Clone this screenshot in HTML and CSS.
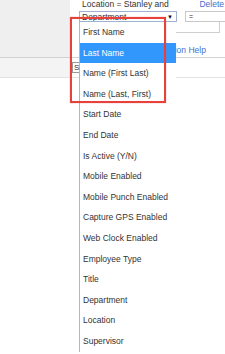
FILE: index.html
```
<!DOCTYPE html>
<html lang="en">

<head>
    <meta charset="UTF-8">
    <meta name="viewport" content="width=device-width, initial-scale=1.0">
    <title>Filter fields</title>
    <link rel="stylesheet" href="styles.css">
</head>

<body>
    <div class="page">
        <div class="top">
            <div class="side"></div>
            <div class="criteria">
                <div class="line1">
                    <span>Location = Stanley and</span>
                    <a class="link">Delete</a>
                </div>
                <div class="line2">
                    <div class="select-box">Department <span class="arrow">&#9660;</span></div>
                    <div class="op-box">=</div>
                </div>
                <div class="line3">
                    <div class="value-box"></div>
                </div>
                <div class="help"><a class="link">Expression Help</a></div>
            </div>
        </div>

        <div class="band">
            <div class="band-side"></div>
            <div class="small-select">S</div>
        </div>

        <!-- open dropdown list -->
        <ul class="popup">
            <li>First Name</li>
            <li class="active">Last Name</li>
            <li>Name (First Last)</li>
            <li>Name (Last, First)</li>
            <li>Start Date</li>
            <li>End Date</li>
            <li>Is Active (Y/N)</li>
            <li>Mobile Enabled</li>
            <li>Mobile Punch Enabled</li>
            <li>Capture GPS Enabled</li>
            <li>Web Clock Enabled</li>
            <li>Employee Type</li>
            <li>Title</li>
            <li>Department</li>
            <li>Location</li>
            <li>Supervisor</li>
        </ul>

        <!-- annotation -->
        <div class="mark"></div>
    </div>
</body>

</html>
```

FILE: styles.css
```
body {
    margin: 0;
    padding: 0;
    background-color: white;
    font-family: "Liberation Sans", Arial, sans-serif;
    font-size: 8.5px;
    color: #333;
    overflow: hidden;
}

.page {
    position: relative;
    width: 225px;
    height: 354px;
    overflow: hidden;
}

.top {
    display: flex;
    height: 57px;
    border-bottom: 1px solid #d2d2d2;
}

.side {
    width: 70px;
    background-color: #efefef;
}

.criteria {
    flex: 1;
    min-width: 0;
}

.line1 {
    display: flex;
    justify-content: space-between;
    margin-left: 12px;
    padding-right: 1px;
    height: 9px;
    line-height: 9px;
}

.link {
    color: #3e6fcf;
}

.line2 {
    display: flex;
    gap: 8px;
    margin-top: 2px;
    margin-left: 9px;
    margin-right: -6px;
}

.select-box {
    position: relative;
    width: 94px;
    height: 9px;
    line-height: 10px;
    padding-left: 2px;
    border: 1px solid #9fb3d1;
    overflow: hidden;
}

.arrow {
    position: absolute;
    right: 3px;
    top: 0;
    font-size: 6px;
    color: #111;
}

.op-box {
    flex: 1;
    height: 9px;
    line-height: 9px;
    padding-left: 3px;
    border: 1px solid #c8c8c8;
    font-size: 7px;
}

.line3 {
    padding-left: 105px;
}

.value-box {
    width: 43px;
    height: 10px;
    border: 1px solid #cfcfcf;
    border-top: none;
}

.help {
    margin-top: 12px;
    margin-left: 74px;
    line-height: 10px;
}

.band {
    display: flex;
    height: 19px;
    border-bottom: 1px solid #e2e2e2;
}

.band-side {
    width: 70px;
    background-color: #f4f4f4;
}

.small-select {
    margin-top: 4px;
    margin-left: 2px;
    width: 12px;
    height: 9px;
    line-height: 9px;
    padding-left: 1px;
    border: 1px solid #999;
    background: white;
    font-size: 8px;
}

.popup {
    position: absolute;
    left: 79px;
    top: 22px;
    width: 96px;
    margin: 0;
    padding: 0;
    list-style: none;
    background: white;
    border-left: 1px solid #a9b8cc;
}

.popup li {
    height: 20.6px;
    line-height: 20.6px;
    padding-left: 3px;
    white-space: nowrap;
}

.popup li.active {
    background-color: #3297fd;
    color: white;
}

.mark {
    position: absolute;
    left: 70px;
    top: 17px;
    width: 92px;
    height: 82px;
    border: 2px solid #e8413c;
    box-shadow: 0 0 1px rgba(232, 65, 60, 0.6);
}
```
